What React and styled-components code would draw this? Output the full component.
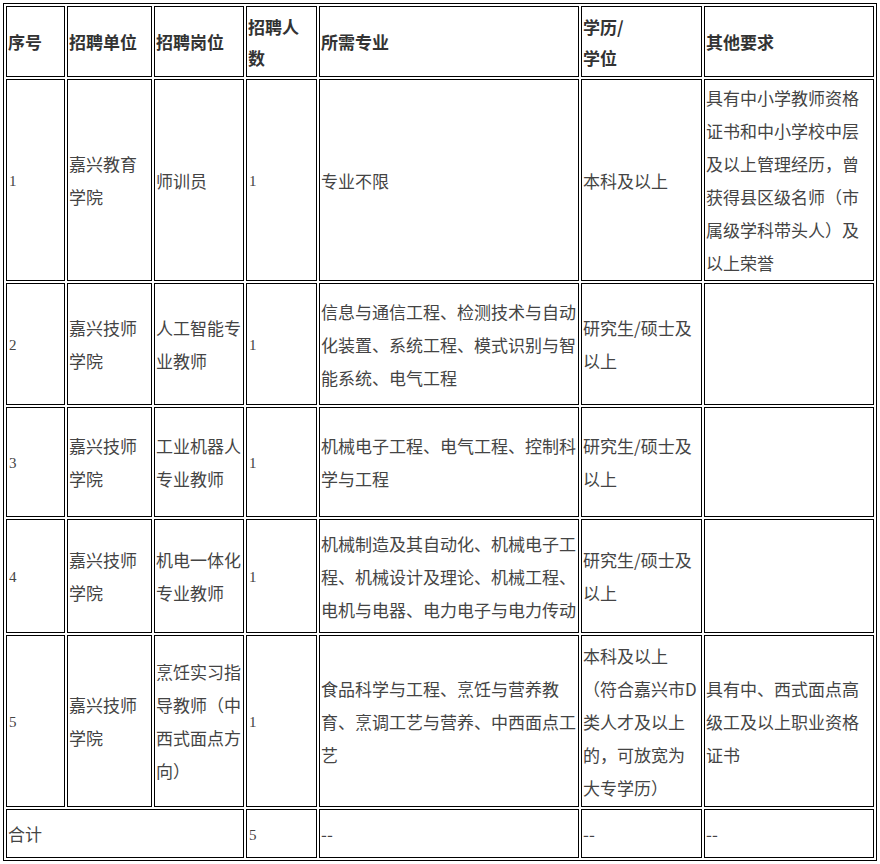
import React from 'react';
import styled, { createGlobalStyle } from 'styled-components';

const GlobalStyle = createGlobalStyle`
  body {
    margin: 0;
    background: #fff;
  }
`;

const Page = styled.div`
  padding: 3px;
`;

const Table = styled.table`
  width: 874px;
  table-layout: fixed;
  border-collapse: separate;
  border-spacing: 2px;
  border: 1px solid #000;
  font-family: "Noto Sans CJK SC", "Noto Sans", sans-serif;
  font-size: 17px;
  line-height: 33px;
  color: #444;
`;

const Row = styled.tr`
  height: ${p => p.$h}px;
`;

const HeadCell = styled.th`
  border: 1px solid #000;
  padding: 0 1px;
  text-align: left;
  vertical-align: middle;
  font-weight: bold;
  color: #333;
  line-height: 31px;
`;

const Cell = styled.td`
  border: 1px solid #000;
  padding: 0 1px;
  vertical-align: middle;
  word-break: normal;
`;

const Num = styled.span`
  font-family: "Liberation Serif", serif;
  font-size: 15px;
  padding-left: 1px;
`;

const widths = [59, 85, 90, 71, 260, 121, 170];

const rows = [
  {
    h: 202,
    no: '1',
    unit: '嘉兴教育学院',
    job: '师训员',
    count: '1',
    major: '专业不限',
    edu: '本科及以上',
    other: '具有中小学教师资格证书和中小学校中层及以上管理经历，曾获得县区级名师（市属级学科带头人）及以上荣誉',
  },
  {
    h: 122,
    no: '2',
    unit: '嘉兴技师学院',
    job: '人工智能专业教师',
    count: '1',
    major: '信息与通信工程、检测技术与自动化装置、系统工程、模式识别与智能系统、电气工程',
    edu: '研究生/硕士及以上',
    other: '',
  },
  {
    h: 110,
    no: '3',
    unit: '嘉兴技师学院',
    job: '工业机器人专业教师',
    count: '1',
    major: '机械电子工程、电气工程、控制科学与工程',
    edu: '研究生/硕士及以上',
    other: '',
  },
  {
    h: 114,
    no: '4',
    unit: '嘉兴技师学院',
    job: '机电一体化专业教师',
    count: '1',
    major: '机械制造及其自动化、机械电子工程、机械设计及理论、机械工程、电机与电器、电力电子与电力传动',
    edu: '研究生/硕士及以上',
    other: '',
  },
  {
    h: 172,
    no: '5',
    unit: '嘉兴技师学院',
    job: '烹饪实习指导教师（中西式面点方向）',
    count: '1',
    major: '食品科学与工程、烹饪与营养教育、烹调工艺与营养、中西面点工艺',
    edu: '本科及以上（符合嘉兴市D类人才及以上的，可放宽为大专学历）',
    other: '具有中、西式面点高级工及以上职业资格证书',
  },
];

export default function App() {
  return (
    <Page>
      <GlobalStyle />
      <Table>
        <colgroup>
          {widths.map((w, i) => (
            <col key={i} style={{ width: w }} />
          ))}
        </colgroup>
        <thead>
          <Row $h={71}>
            <HeadCell>序号</HeadCell>
            <HeadCell>招聘单位</HeadCell>
            <HeadCell>招聘岗位</HeadCell>
            <HeadCell>招聘人<br />数</HeadCell>
            <HeadCell>所需专业</HeadCell>
            <HeadCell>学历/<br />学位</HeadCell>
            <HeadCell>其他要求</HeadCell>
          </Row>
        </thead>
        <tbody>
          {rows.map(r => (
            <Row key={r.no} $h={r.h}>
              <Cell><Num>{r.no}</Num></Cell>
              <Cell>{r.unit}</Cell>
              <Cell>{r.job}</Cell>
              <Cell><Num>{r.count}</Num></Cell>
              <Cell>{r.major}</Cell>
              <Cell>{r.edu}</Cell>
              <Cell>{r.other}</Cell>
            </Row>
          ))}
          <Row $h={49}>
            <Cell colSpan={3}>合计</Cell>
            <Cell><Num>5</Num></Cell>
            <Cell>--</Cell>
            <Cell>--</Cell>
            <Cell>--</Cell>
          </Row>
        </tbody>
      </Table>
    </Page>
  );
}
